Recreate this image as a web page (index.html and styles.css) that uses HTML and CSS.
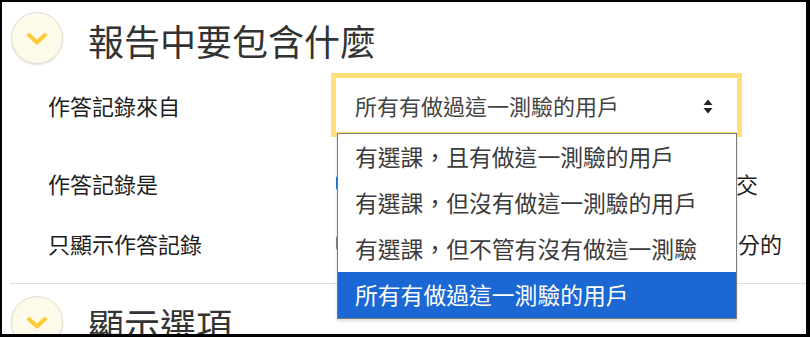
FILE: index.html
```html
<!DOCTYPE html>
<html lang="zh-Hant">

<head>
    <meta charset="UTF-8">
    <meta name="viewport" content="width=device-width, initial-scale=1.0">
    <title>報告選項</title>
    <link rel="stylesheet" href="styles.css">
</head>

<body>

    <div class="frame">

        <!-- 報告內容區 -->
        <div class="section_head">
            <div class="toggle">
                <svg width="22" height="14" viewBox="0 0 22 14">
                    <path d="M3 3 L11 10.5 L19 3" fill="none" stroke="#fccb3a" stroke-width="4" stroke-linecap="round" stroke-linejoin="round"/>
                </svg>
            </div>
            <h2 class="section_title">報告中要包含什麼</h2>
        </div>

        <div class="form">
            <div class="row row1">
                <div class="label">作答記錄來自</div>
                <div class="select_wrap">
                    <div class="select">
                        <span>所有有做過這一測驗的用戶</span>
                        <svg class="updown" width="10" height="15" viewBox="0 0 10 15">
                            <path d="M5 0.5 L9.5 6 L0.5 6 Z" fill="#222"/>
                            <path d="M5 14.5 L9.5 9 L0.5 9 Z" fill="#222"/>
                        </svg>
                    </div>
                    <!-- 下拉選單 -->
                    <ul class="dropdown">
                        <li>有選課，且有做這一測驗的用戶</li>
                        <li>有選課，但沒有做這一測驗的用戶</li>
                        <li>有選課，但不管有沒有做這一測驗</li>
                        <li class="selected">所有有做過這一測驗的用戶</li>
                    </ul>
                </div>
            </div>

            <div class="row row2">
                <div class="label">作答記錄是</div>
                <span class="check checked"></span>
                <span class="opt_text">進行中　　已逾期　　從未提交　已提交</span>
            </div>

            <div class="row row3">
                <div class="label">只顯示作答記錄</div>
                <span class="check"></span>
                <span class="opt_text">只顯示每位用戶的一次作答記錄：最高分的</span>
            </div>
        </div>

        <hr class="divider">

        <!-- 顯示選項區 -->
        <div class="section_head second">
            <div class="toggle">
                <svg width="22" height="14" viewBox="0 0 22 14">
                    <path d="M3 3 L11 10.5 L19 3" fill="none" stroke="#fccb3a" stroke-width="4" stroke-linecap="round" stroke-linejoin="round"/>
                </svg>
            </div>
            <h2 class="section_title">顯示選項</h2>
        </div>

    </div>

</body>

</html>
```

FILE: styles.css
```css
body {
    margin: 0;
    font-family: "Noto Sans CJK TC", "Noto Sans", sans-serif;
}

.frame {
    width: 810px;
    height: 337px;
    box-sizing: border-box;
    border-style: solid;
    border-color: #000;
    border-width: 2px 4px 3px 2px;
    background-color: #fff;
    overflow: hidden;
}

.section_head {
    display: flex;
    align-items: center;
    padding: 10px 0 0 9px;
}

.toggle {
    width: 50px;
    height: 50px;
    border-radius: 50%;
    border: 1px solid #e2dfd6;
    background-color: #fefae9;
    box-shadow: 0 1px 2px rgba(0, 0, 0, 0.12);
    display: flex;
    align-items: center;
    justify-content: center;
    flex-shrink: 0;
}

.toggle svg {
    margin-top: 1px;
}

.section_title {
    margin: 0 0 0 25px;
    font-size: 36px;
    font-weight: normal;
    line-height: 52px;
    color: #333;
    position: relative;
    top: 2px;
}

.form {
    padding-left: 46px;
}

.row {
    display: flex;
    align-items: center;
    font-size: 22px;
    line-height: 30px;
    color: #1d1d1d;
}

.label {
    width: 288px;
    flex-shrink: 0;
}

.row1 {
    margin-top: 14px;
}

.row2 {
    margin-top: 36px;
}

.row3 {
    margin-top: 30px;
}

/* 選單 */
.select_wrap {
    position: relative;
}

.select {
    width: 401px;
    height: 54px;
    box-sizing: border-box;
    background-color: #fff;
    box-shadow: 0 0 0 5px #ffe07a;
    display: flex;
    align-items: center;
    justify-content: space-between;
    padding: 0 24px 0 19px;
    color: #444;
}

.updown {
    margin-top: 2px;
}

.dropdown {
    position: absolute;
    top: 55px;
    left: 1px;
    width: 400px;
    box-sizing: border-box;
    margin: 0;
    padding: 0;
    list-style: none;
    background-color: #fff;
    border: 1px solid #7a7a7a;
    box-shadow: 0 2px 3px rgba(0, 0, 0, 0.15);
    z-index: 10;
}

.dropdown li {
    height: 46px;
    line-height: 46px;
    padding-left: 17px;
    font-size: 22.8px;
    color: #3b3b3b;
    white-space: nowrap;
}

.dropdown li.selected {
    background-color: #1b67d3;
    color: #fff;
}

/* 가려진 체크박스 */
.check {
    width: 14px;
    height: 14px;
    box-sizing: border-box;
    border: 2px solid #888;
    border-radius: 2px;
    flex-shrink: 0;
}

.check.checked {
    border-color: #1d72d8;
    background-color: #1d72d8;
}

.opt_text {
    white-space: nowrap;
}

.row2 .opt_text {
    margin-left: 12px;
}

.row3 .opt_text {
    margin-left: 14px;
}

.divider {
    margin: 25px 0 0 8px;
    border: none;
    border-top: 1px solid #ddd;
}

.second {
    padding-top: 12px;
}
```
